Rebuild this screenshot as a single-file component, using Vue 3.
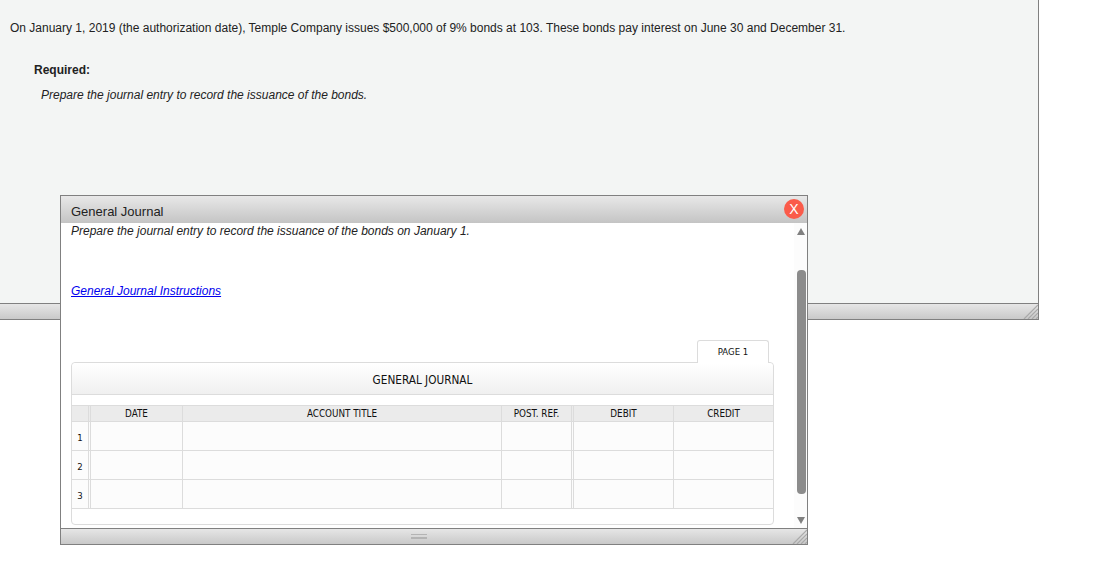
<script setup>
const columns = [
  { key: 'date', label: 'DATE' },
  { key: 'account', label: 'ACCOUNT TITLE' },
  { key: 'post', label: 'POST. REF.' },
  { key: 'debit', label: 'DEBIT' },
  { key: 'credit', label: 'CREDIT' }
]

const rows = [1, 2, 3]
</script>

<template>
  <div class="page">
    <div class="question">
      <div class="question-body">
        <p class="intro">On January 1, 2019 (the authorization date), Temple Company issues $500,000 of 9% bonds at 103. These bonds pay interest on June 30 and December 31.</p>
        <div class="required">Required:</div>
        <p class="task">Prepare the journal entry to record the issuance of the bonds.</p>
      </div>
      <div class="bar">
        <svg class="grip" width="15" height="15" viewBox="0 0 15 15">
          <path d="M1 15 15 1M5 15 15 5M9 15 15 9M13 15 15 13" stroke="#a9a9a9" stroke-width="1.2" fill="none" />
        </svg>
      </div>
    </div>

    <div class="dialog">
      <div class="dialog-title">
        <span>General Journal</span>
        <span class="close">X</span>
      </div>
      <div class="dialog-main">
        <div class="dialog-content">
          <p class="prompt">Prepare the journal entry to record the issuance of the bonds on January 1.</p>
          <a class="link" href="#">General Journal Instructions</a>
          <div class="tabs">
            <div class="tab">PAGE 1</div>
          </div>
          <div class="card">
            <div class="card-title">GENERAL JOURNAL</div>
            <div class="grid">
              <div class="row head">
                <div class="num"></div>
                <div v-for="col in columns" :key="col.key" class="cell" :class="col.key">{{ col.label }}</div>
              </div>
              <div v-for="n in rows" :key="n" class="row body">
                <div class="num">{{ n }}</div>
                <div v-for="col in columns" :key="col.key" class="cell" :class="col.key"></div>
              </div>
            </div>
          </div>
        </div>
        <div class="scroll">
          <span class="arrow up"></span>
          <span class="thumb"></span>
          <span class="arrow down"></span>
        </div>
      </div>
      <div class="bar dialog-bar">
        <span class="handle"></span>
        <svg class="grip" width="15" height="15" viewBox="0 0 15 15">
          <path d="M1 15 15 1M5 15 15 5M9 15 15 9M13 15 15 13" stroke="#a9a9a9" stroke-width="1.2" fill="none" />
        </svg>
      </div>
    </div>
  </div>
</template>

<style>
html,
body {
  background: #fff;
  overflow: hidden;
}
</style>

<style scoped>
.page {
  position: relative;
  width: 1104px;
  height: 571px;
  font-family: "Liberation Sans", Arial, sans-serif;
  font-size: 12px;
  color: #222;
}

.question {
  width: 1039px;
  height: 320px;
  display: flex;
  flex-direction: column;
  box-sizing: border-box;
  background: #f3f5f4;
  border-right: 1px solid #808080;
}

.question-body {
  flex: 1;
  padding: 21px 0 0 10px;
}

.intro {
  margin: 0;
  line-height: 14px;
}

.required {
  margin: 28px 0 0 24px;
  font-weight: bold;
  line-height: 14px;
}

.task {
  margin: 11px 0 0 31px;
  font-style: italic;
  line-height: 14px;
}

.bar {
  position: relative;
  height: 15px;
  flex: none;
  border-top: 1px solid #808080;
  border-bottom: 1px solid #808080;
  background: linear-gradient(#e6e6e6, #c9c9c9);
}

.grip {
  position: absolute;
  right: 0;
  bottom: 0;
}

.dialog {
  position: absolute;
  left: 60px;
  top: 195px;
  width: 748px;
  height: 350px;
  box-sizing: border-box;
  display: flex;
  flex-direction: column;
  background: #fff;
  border: 1px solid #808080;
}

.dialog-title {
  height: 27px;
  flex: none;
  display: flex;
  align-items: center;
  justify-content: space-between;
  box-sizing: border-box;
  padding: 3px 3px 0 10px;
  font-size: 13px;
  background: linear-gradient(#e8e8e8, #c4c4c4);
}

.close {
  width: 20px;
  height: 20px;
  margin-top: -5px;
  border-radius: 50%;
  background: #fa5b4a;
  color: #fff;
  font-size: 14px;
  line-height: 20px;
  text-align: center;
}

.dialog-main {
  flex: 1;
  display: flex;
  min-height: 0;
}

.dialog-content {
  flex: 1;
  padding-left: 10px;
}

.prompt {
  margin: 1px 0 0;
  font-style: italic;
  line-height: 14px;
}

.link {
  display: block;
  margin-top: 46px;
  color: #0000ee;
  font-style: italic;
  line-height: 14px;
}

.tabs {
  display: flex;
  justify-content: flex-end;
  box-sizing: border-box;
  width: 703px;
  margin: 42px 0 0;
  padding-right: 5px;
}

.tab,
.card-title,
.cell,
.num {
  font-family: "DejaVu Sans", sans-serif;
  font-stretch: condensed;
  color: #111;
}

.tab {
  width: 72px;
  height: 23px;
  box-sizing: border-box;
  margin-bottom: -1px;
  border: 1px solid #dcdcdc;
  border-bottom: none;
  border-radius: 3px 3px 0 0;
  background: #fff;
  font-size: 9.5px;
  line-height: 21px;
  text-align: center;
  position: relative;
}

.card {
  width: 703px;
  height: 163px;
  box-sizing: border-box;
  border: 1px solid #dcdcdc;
  border-radius: 4px;
  background: #fff;
}

.card-title {
  height: 32px;
  box-sizing: border-box;
  padding-top: 2px;
  border-bottom: 1px solid #dcdcdc;
  border-radius: 4px 4px 0 0;
  background: linear-gradient(#fff, #f0f0f0);
  font-size: 11.7px;
  line-height: 31px;
  text-align: center;
}

.grid {
  margin-top: 10px;
  border-top: 1px solid #dcdcdc;
}

.row {
  display: flex;
  box-sizing: border-box;
  border-bottom: 1px solid #dcdcdc;
}

.row.head {
  height: 16px;
  background: #ebebeb;
}

.row.body {
  height: 29px;
  background: #fcfcfc;
}

.num {
  flex: none;
  width: 17px;
  margin-right: 1px;
  box-sizing: border-box;
  border-right: 1px solid #dcdcdc;
  font-size: 9.5px;
  line-height: 31px;
  text-align: center;
}

.cell {
  flex: none;
  box-sizing: border-box;
  border-left: 1px solid #dcdcdc;
  font-size: 9.8px;
  line-height: 15px;
  text-align: center;
}

.date {
  width: 92px;
}

.account {
  width: 319px;
}

.post {
  width: 71px;
  border-right: 1px solid #dcdcdc;
  margin-right: 1px;
}

.debit {
  width: 100px;
}

.credit {
  width: 100px;
}

.scroll {
  position: relative;
  width: 13px;
  flex: none;
  background: #fcfcfc;
}

.arrow {
  position: absolute;
  left: 3px;
  width: 0;
  height: 0;
  border-left: 4.5px solid transparent;
  border-right: 4.5px solid transparent;
}

.arrow.up {
  top: 5px;
  border-bottom: 7px solid #808080;
}

.arrow.down {
  bottom: 4px;
  border-top: 7px solid #808080;
}

.thumb {
  position: absolute;
  left: 3px;
  top: 47px;
  width: 9px;
  height: 224px;
  border-radius: 4px;
  background: #8c8c8c;
}

.dialog-bar {
  border-bottom: none;
}

.handle {
  position: absolute;
  left: 350px;
  top: 5px;
  width: 16px;
  height: 5px;
  border-top: 1px solid #b4b4b4;
  border-bottom: 2px solid #b4b4b4;
  box-sizing: border-box;
}
</style>
